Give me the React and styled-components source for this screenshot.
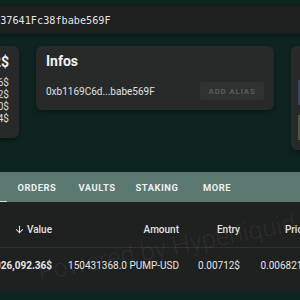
import React from "react";
import styled, { createGlobalStyle } from "styled-components";
import { ArrowDown } from "lucide-react";

const GlobalStyle = createGlobalStyle`
  html, body {
    margin: 0;
    padding: 0;
    background: #0d2420;
    overflow: hidden;
  }
  body {
    font-family: Roboto, "Liberation Sans", sans-serif;
    color: #e8e8e8;
  }
`;

const Viewport = styled.div`
  position: relative;
  width: 300px;
  height: 300px;
  overflow: hidden;
`;

// page is wider than the window and scrolled to the left
const Page = styled.div`
  width: 820px;
  margin-left: -180px;
  padding-top: 6px;
`;

const AddressBar = styled.div`
  height: 28px;
  display: flex;
  align-items: center;
  padding-left: 33px;
  background: #1e1f1f;
  box-shadow: 0 1px 3px rgba(0, 0, 0, 0.4);
`;

const MonoAddress = styled.span`
  font-family: "DejaVu Sans Mono", "Liberation Mono", monospace;
  font-size: 10.2px;
  color: #e4e4e4;
  white-space: nowrap;
`;

const CardsRow = styled.div`
  display: flex;
  align-items: flex-start;
  gap: 17px;
  margin-top: 12px;
  padding-left: 16px;
`;

const Card = styled.div`
  box-sizing: border-box;
  flex-shrink: 0;
  width: ${(p) => p.$w}px;
  height: ${(p) => p.$h}px;
  background: #272a29;
  border-radius: 6px;
  box-shadow: 0 2px 4px rgba(0, 0, 0, 0.35);
`;

const SummaryCard = styled(Card)`
  padding: 7.5px 10px 0 10px;
  text-align: right;
`;

const SummaryTotal = styled.div`
  font-size: 14px;
  line-height: 16px;
  font-weight: 700;
  color: #f2f2f2;
  white-space: nowrap;
  margin-bottom: 7px;
`;

const SummaryLine = styled.div`
  font-size: 10px;
  line-height: 12.3px;
  color: #dedede;
  white-space: nowrap;
`;

const InfoCard = styled(Card)`
  padding: 7px 10px 10px 10px;
  display: flex;
  flex-direction: column;
`;

const CardTitle = styled.div`
  font-size: 14px;
  line-height: 16px;
  font-weight: 700;
  color: #f2f2f2;
`;

const InfoRow = styled.div`
  margin-top: 13px;
  display: flex;
  align-items: center;
  justify-content: space-between;
  height: 18px;
`;

const ShortAddress = styled.span`
  font-size: 10px;
  color: #e0e0e0;
`;

const AliasButton = styled.button`
  height: 18px;
  padding: 0 8.5px;
  border: none;
  border-radius: 3px;
  background: #2f3231;
  color: #5e6361;
  font-family: Roboto, "Liberation Sans", sans-serif;
  font-size: 7.8px;
  font-weight: 500;
  letter-spacing: 0.9px;
`;

const ChartCard = styled(Card)`
  padding: 34px 0 0 7px;
  display: flex;
  flex-direction: column;
  gap: 10px;
`;

const ChartBlock = styled.div`
  height: 25px;
  width: 60px;
  background: ${(p) => p.$color};
`;

const TabsBar = styled.div`
  margin-top: 22px;
  height: 30px;
  display: flex;
  padding-left: 7px;
  background: #5b7771;
`;

const Tab = styled.div`
  position: relative;
  flex-shrink: 0;
  width: 60px;
  display: flex;
  align-items: center;
  justify-content: center;
  font-size: 9.4px;
  font-weight: 700;
  letter-spacing: 0.55px;
  color: #eef1f0;
  white-space: nowrap;

  &::after {
    content: "";
    position: absolute;
    left: 0;
    right: 0;
    bottom: -1px;
    height: 2px;
    background: ${(p) => (p.$active ? "#d5dad8" : "transparent")};
  }
`;

const Table = styled.div`
  position: relative;
  background: #1f2020;
  padding-top: 10px;
  padding-bottom: 8px;
`;

const Row = styled.div`
  display: flex;
  height: 35px;
  align-items: center;
  border-bottom: ${(p) => (p.$head ? "1px solid #303232" : "none")};
`;

const Cell = styled.div`
  box-sizing: border-box;
  width: ${(p) => p.$w}px;
  flex-shrink: 0;
  padding-right: 16px;
  display: flex;
  justify-content: flex-end;
  align-items: center;
  gap: 2px;
  font-size: 10px;
  font-weight: ${(p) => (p.$bold ? 700 : p.$head ? 500 : 400)};
  color: ${(p) => (p.$head ? "#e2e2e2" : "#e6e6e6")};
  white-space: nowrap;
`;

const Watermark = styled.div`
  position: absolute;
  left: 38px;
  top: 258px;
  font-size: 25.5px;
  line-height: 28px;
  font-weight: 300;
  color: rgba(255, 255, 255, 0.065);
  white-space: nowrap;
  transform: rotate(-11deg);
  transform-origin: left center;
  pointer-events: none;
`;

const cols = [120, 128, 127, 61, 68, 70];

export default function App() {
  return (
    <Viewport>
      <GlobalStyle />
      <Page>
        <AddressBar>
          <MonoAddress>0xb1169C6d2A4e9f08B53c7D37641Fc38fbabe569F</MonoAddress>
        </AddressBar>

        <CardsRow>
          <SummaryCard $w={183} $h={92}>
            <SummaryTotal>1,028,412$</SummaryTotal>
            <SummaryLine>1,026,092.36$</SummaryLine>
            <SummaryLine>1,312.12$</SummaryLine>
            <SummaryLine>0.00$</SummaryLine>
            <SummaryLine>1,007.84$</SummaryLine>
          </SummaryCard>

          <InfoCard $w={238} $h={64}>
            <CardTitle>Infos</CardTitle>
            <InfoRow>
              <ShortAddress>0xb1169C6d...babe569F</ShortAddress>
              <AliasButton>ADD ALIAS</AliasButton>
            </InfoRow>
          </InfoCard>

          <ChartCard $w={200} $h={104}>
            <ChartBlock $color="#36446a" />
            <ChartBlock $color="#4e5a45" />
          </ChartCard>
        </CardsRow>

        <TabsBar>
          <Tab>TXS</Tab>
          <Tab>SPOT</Tab>
          <Tab $active>PERPS</Tab>
          <Tab>ORDERS</Tab>
          <Tab>VAULTS</Tab>
          <Tab>STAKING</Tab>
          <Tab>MORE</Tab>
        </TabsBar>

        <Table>
          <Row $head>
            <Cell $w={cols[0]} $head>Coin</Cell>
            <Cell $w={cols[1]} $head>
              <ArrowDown size={11} strokeWidth={2.2} />
              Value
            </Cell>
            <Cell $w={cols[2]} $head>Amount</Cell>
            <Cell $w={cols[3]} $head>Entry</Cell>
            <Cell $w={cols[4]} $head>Price</Cell>
            <Cell $w={cols[5]} $head>PnL</Cell>
          </Row>
          <Row>
            <Cell $w={cols[0]}>PUMP</Cell>
            <Cell $w={cols[1]} $bold>1,026,092.36$</Cell>
            <Cell $w={cols[2]}>150431368.0 PUMP-USD</Cell>
            <Cell $w={cols[3]}>0.00712$</Cell>
            <Cell $w={cols[4]}>0.006821$</Cell>
            <Cell $w={cols[5]}>-44,978$</Cell>
          </Row>
        </Table>
      </Page>
      <Watermark>Powered by Hyperliquid</Watermark>
    </Viewport>
  );
}
